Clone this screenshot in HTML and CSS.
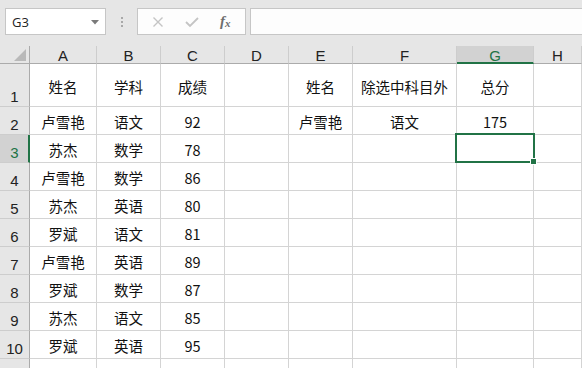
FILE: index.html
```html
<!DOCTYPE html>
<html lang="zh">
<head>
<meta charset="utf-8">
<link rel="stylesheet" href="styles.css">
</head>
<body>
<div class="app">
  <div class="toolbar">
    <div class="namebox">
      <span class="nb-text">G3</span>
      <svg class="nb-arrow" width="8" height="5" viewBox="0 0 8 5"><path d="M0 0H8L4 4.5Z" fill="#7a7a7a"/></svg>
    </div>
    <div class="dots"><i></i><i></i><i></i></div>
    <div class="fbuttons">
      <svg class="ic" width="12" height="12" viewBox="0 0 12 12"><path d="M1.5 1.5L10.5 10.5M10.5 1.5L1.5 10.5" stroke="#c4c4c4" stroke-width="1.4" fill="none"/></svg>
      <svg class="ic" width="14" height="12" viewBox="0 0 14 12"><path d="M1 6L5 10L13 2" stroke="#c4c4c4" stroke-width="1.8" fill="none"/></svg>
      <span class="fx">f<sub>x</sub></span>
    </div>
    <div class="finput"></div>
  </div>
  <div class="sheet">
    <div class="ch corner"><span class="tri"></span></div>
    <div class="ch">A</div><div class="ch">B</div><div class="ch">C</div><div class="ch">D</div><div class="ch">E</div><div class="ch">F</div><div class="ch sel">G</div><div class="ch">H</div>

    <div class="rh r1">1</div>
    <div class="c">姓名</div><div class="c">学科</div><div class="c">成绩</div><div class="c"></div><div class="c">姓名</div><div class="c">除选中科目外</div><div class="c">总分</div><div class="c"></div>

    <div class="rh">2</div>
    <div class="c">卢雪艳</div><div class="c">语文</div><div class="c">92</div><div class="c"></div><div class="c">卢雪艳</div><div class="c">语文</div><div class="c">175</div><div class="c"></div>

    <div class="rh sel">3</div>
    <div class="c">苏杰</div><div class="c">数学</div><div class="c">78</div><div class="c"></div><div class="c"></div><div class="c"></div><div class="c active"><span class="cursor"><span class="handle"></span></span></div><div class="c"></div>

    <div class="rh">4</div>
    <div class="c">卢雪艳</div><div class="c">数学</div><div class="c">86</div><div class="c"></div><div class="c"></div><div class="c"></div><div class="c"></div><div class="c"></div>

    <div class="rh">5</div>
    <div class="c">苏杰</div><div class="c">英语</div><div class="c">80</div><div class="c"></div><div class="c"></div><div class="c"></div><div class="c"></div><div class="c"></div>

    <div class="rh">6</div>
    <div class="c">罗斌</div><div class="c">语文</div><div class="c">81</div><div class="c"></div><div class="c"></div><div class="c"></div><div class="c"></div><div class="c"></div>

    <div class="rh">7</div>
    <div class="c">卢雪艳</div><div class="c">英语</div><div class="c">89</div><div class="c"></div><div class="c"></div><div class="c"></div><div class="c"></div><div class="c"></div>

    <div class="rh">8</div>
    <div class="c">罗斌</div><div class="c">数学</div><div class="c">87</div><div class="c"></div><div class="c"></div><div class="c"></div><div class="c"></div><div class="c"></div>

    <div class="rh">9</div>
    <div class="c">苏杰</div><div class="c">语文</div><div class="c">85</div><div class="c"></div><div class="c"></div><div class="c"></div><div class="c"></div><div class="c"></div>

    <div class="rh">10</div>
    <div class="c">罗斌</div><div class="c">英语</div><div class="c">95</div><div class="c"></div><div class="c"></div><div class="c"></div><div class="c"></div><div class="c"></div>

    <div class="rh"></div>
    <div class="c"></div><div class="c"></div><div class="c"></div><div class="c"></div><div class="c"></div><div class="c"></div><div class="c"></div><div class="c"></div>
  </div>
</div>
</body>
</html>
```

FILE: styles.css
```css
html, body {
  margin: 0;
  padding: 0;
  background: #e6e6e6;
  overflow: hidden;
}
.app {
  width: 582px;
  height: 368px;
  overflow: hidden;
  font-family: "Liberation Sans", Arial, sans-serif;
}
.toolbar {
  height: 46px;
  display: flex;
  align-items: flex-start;
  padding-top: 8px;
  box-sizing: border-box;
  padding-left: 5px;
}
.namebox {
  width: 101px;
  height: 27px;
  box-sizing: border-box;
  border: 1px solid #c6c6c6;
  background: #fff;
  display: flex;
  align-items: center;
  justify-content: space-between;
  padding: 0 6px 0 6px;
}
.nb-text {
  font-family: "Open Sans", "Liberation Sans", sans-serif;
  font-size: 13px;
  color: #222;
}
.nb-arrow { margin-top: 1px; }
.dots {
  width: 31px;
  height: 27px;
  display: flex;
  flex-direction: column;
  align-items: center;
  justify-content: center;
  gap: 2px;
}
.dots i {
  display: block;
  width: 2px;
  height: 2px;
  background: #a8a8a8;
}
.fbuttons {
  width: 109px;
  height: 27px;
  box-sizing: border-box;
  border: 1px solid #c6c6c6;
  background: #fdfdfd;
  display: flex;
  align-items: center;
  padding-left: 14px;
  gap: 21px;
}
.fx {
  font-family: "Liberation Serif", serif;
  font-style: italic;
  font-weight: bold;
  font-size: 15px;
  color: #6e6e6e;
  margin-left: 0;
}
.fx sub {
  font-size: 11px;
  vertical-align: -1px;
}
.finput {
  margin-left: 4px;
  flex: 1;
  height: 27px;
  box-sizing: border-box;
  border: 1px solid #c6c6c6;
  border-right: none;
  background: #fdfdfd;
}
.sheet {
  display: grid;
  grid-template-columns: 30px 67px 64px 64px 64px 64px 104px 77px 1fr;
  grid-template-rows: 18px 43px repeat(10, 28px);
  background: #fff;
}
.ch {
  background: #e6e6e6;
  border-right: 1px solid #cdcdcd;
  border-bottom: 1px solid #ababab;
  display: flex;
  align-items: center;
  justify-content: center;
  font-size: 15px;
  color: #222;
  line-height: 1;
  box-sizing: border-box;
  padding-top: 1px;
}
.ch.corner {
  border-right: 1px solid #ababab;
  position: relative;
}
.tri {
  position: absolute;
  right: 3px;
  bottom: 2px;
  width: 0;
  height: 0;
  border-left: 12px solid transparent;
  border-bottom: 12px solid #b9b9b9;
}
.ch.sel {
  background: #d2d2d2;
  color: #217346;
  border-bottom: 2px solid #217346;
  padding-top: 2px;
}
.rh {
  background: #e6e6e6;
  border-right: 1px solid #ababab;
  border-bottom: 1px solid #cdcdcd;
  display: flex;
  align-items: flex-end;
  justify-content: center;
  font-size: 15px;
  line-height: 1;
  color: #222;
  box-sizing: border-box;
  padding-bottom: 2px;
}
.rh.sel {
  background: #d2d2d2;
  color: #217346;
  border-right: 2px solid #217346;
  padding-left: 1px;
}
.c {
  border-right: 1px solid #d4d4d4;
  border-bottom: 1px solid #d4d4d4;
  box-sizing: border-box;
  display: flex;
  align-items: center;
  justify-content: center;
  font-family: "Noto Sans CJK SC", sans-serif;
  font-size: 14.5px;
  color: #111;
  padding-top: 2px;
  white-space: nowrap;
}
.c.active {
  position: relative;
}
.cursor {
  position: absolute;
  left: -2px;
  top: -2px;
  right: -2px;
  bottom: -1px;
  border: 2px solid #217346;
}
.handle {
  position: absolute;
  right: -4px;
  bottom: -4px;
  width: 5px;
  height: 5px;
  background: #217346;
  border: 1px solid #fff;
}
```
